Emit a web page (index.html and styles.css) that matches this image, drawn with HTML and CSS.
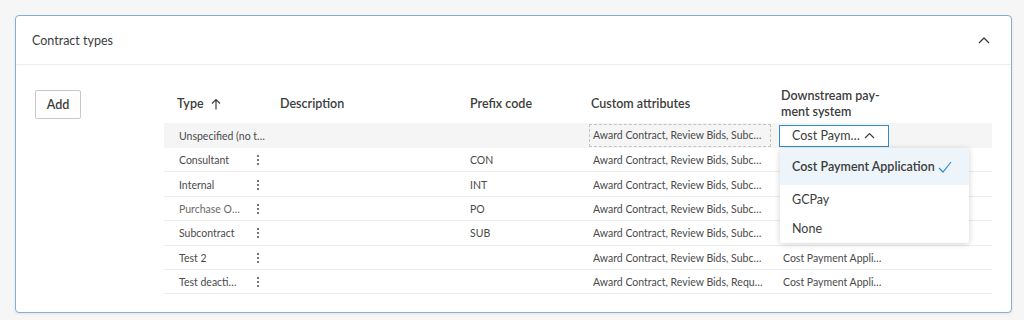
FILE: index.html
```html
<!DOCTYPE html>
<html lang="en">
<head>
  <meta charset="UTF-8" />
  <title>Contract types</title>
  <link rel="stylesheet" href="styles.css">
</head>
<body>

<div class="panel">
  <div class="panel-head">
    <span class="panel-title">Contract types</span>
    <svg class="chevron" width="12" height="8" viewBox="0 0 12 8"><path d="M1 7 L6 2 L11 7" fill="none" stroke="#3c3c3c" stroke-width="1.3"/></svg>
  </div>

  <div class="panel-body">
    <div class="actions">
      <button class="btn">Add</button>
    </div>

    <div class="table">
      <div class="row head">
        <div class="cell c-type">Type
          <svg class="sort" width="10" height="12" viewBox="0 0 10 12"><path d="M5 11.5 V1.5 M1 5.5 L5 1.5 L9 5.5" fill="none" stroke="#3c3c3c" stroke-width="1.2"/></svg>
        </div>
        <div class="cell">Description</div>
        <div class="cell">Prefix code</div>
        <div class="cell">Custom attributes</div>
        <div class="cell c-down">Downstream pay-<br>ment system</div>
      </div>

      <div class="row current">
        <div class="cell c-type"><span class="name wide">Unspecified (no type)</span></div>
        <div class="cell"></div>
        <div class="cell"></div>
        <div class="cell c-attr"><span class="attr-box">Award Contract, Review Bids, Subcontract</span></div>
        <div class="cell c-sel">
          <div class="select">
            <span>Cost Paym…</span>
            <svg width="11" height="7" viewBox="0 0 11 7"><path d="M1 6 L5.5 1.5 L10 6" fill="none" stroke="#3c3c3c" stroke-width="1.2"/></svg>
          </div>
          <div class="menu">
            <div class="opt selected">Cost Payment Application
              <svg width="14" height="12" viewBox="0 0 14 12"><path d="M1 7 L5 11 L13 1" fill="none" stroke="#2f8fd0" stroke-width="1.2"/></svg>
            </div>
            <div class="opt">GCPay</div>
            <div class="opt">None</div>
          </div>
        </div>
      </div>

      <div class="row">
        <div class="cell c-type"><span class="name">Consultant</span><svg class="kebab" width="4" height="12" viewBox="0 0 4 12"><circle cx="2" cy="2" r="1.1"/><circle cx="2" cy="6" r="1.1"/><circle cx="2" cy="10" r="1.1"/></svg></div>
        <div class="cell"></div>
        <div class="cell">CON</div>
        <div class="cell c-txt"><span class="trunc">Award Contract, Review Bids, Subcontract</span></div>
        <div class="cell c-txt"></div>
      </div>
      <div class="row">
        <div class="cell c-type"><span class="name">Internal</span><svg class="kebab" width="4" height="12" viewBox="0 0 4 12"><circle cx="2" cy="2" r="1.1"/><circle cx="2" cy="6" r="1.1"/><circle cx="2" cy="10" r="1.1"/></svg></div>
        <div class="cell"></div>
        <div class="cell">INT</div>
        <div class="cell c-txt"><span class="trunc">Award Contract, Review Bids, Subcontract</span></div>
        <div class="cell c-txt"></div>
      </div>
      <div class="row">
        <div class="cell c-type"><span class="name muted">Purchase Order</span><svg class="kebab" width="4" height="12" viewBox="0 0 4 12"><circle cx="2" cy="2" r="1.1"/><circle cx="2" cy="6" r="1.1"/><circle cx="2" cy="10" r="1.1"/></svg></div>
        <div class="cell"></div>
        <div class="cell">PO</div>
        <div class="cell c-txt"><span class="trunc">Award Contract, Review Bids, Subcontract</span></div>
        <div class="cell c-txt"></div>
      </div>
      <div class="row">
        <div class="cell c-type"><span class="name">Subcontract</span><svg class="kebab" width="4" height="12" viewBox="0 0 4 12"><circle cx="2" cy="2" r="1.1"/><circle cx="2" cy="6" r="1.1"/><circle cx="2" cy="10" r="1.1"/></svg></div>
        <div class="cell"></div>
        <div class="cell">SUB</div>
        <div class="cell c-txt"><span class="trunc">Award Contract, Review Bids, Subcontract</span></div>
        <div class="cell c-txt"></div>
      </div>
      <div class="row">
        <div class="cell c-type"><span class="name">Test 2</span><svg class="kebab" width="4" height="12" viewBox="0 0 4 12"><circle cx="2" cy="2" r="1.1"/><circle cx="2" cy="6" r="1.1"/><circle cx="2" cy="10" r="1.1"/></svg></div>
        <div class="cell"></div>
        <div class="cell"></div>
        <div class="cell c-txt"><span class="trunc">Award Contract, Review Bids, Subcontract</span></div>
        <div class="cell c-txt"><span class="trunc short">Cost Payment Application</span></div>
      </div>
      <div class="row">
        <div class="cell c-type"><span class="name">Test deactivated</span><svg class="kebab" width="4" height="12" viewBox="0 0 4 12"><circle cx="2" cy="2" r="1.1"/><circle cx="2" cy="6" r="1.1"/><circle cx="2" cy="10" r="1.1"/></svg></div>
        <div class="cell"></div>
        <div class="cell"></div>
        <div class="cell c-txt"><span class="trunc">Award Contract, Review Bids, Request</span></div>
        <div class="cell c-txt"><span class="trunc short">Cost Payment Application</span></div>
      </div>
    </div>
  </div>
</div>

</body>
</html>
```

FILE: styles.css
```css
* {
  box-sizing: border-box;
  margin: 0;
  padding: 0;
  font-family: Lato, "Noto Sans", Arial, sans-serif;
}

body {
  background-color: #f6f6f6;
  padding: 15px 12px 7px 15px;
  color: #3c3c3c;
}

.panel {
  height: 298px;
  background-color: #fff;
  border: 1px solid #84afd1;
  border-radius: 4px;
  box-shadow: 0 1px 3px rgba(0, 0, 0, 0.08);
}

.panel-head {
  height: 49px;
  display: flex;
  align-items: center;
  justify-content: space-between;
  padding: 0 21px 0 16px;
  border-bottom: 1px solid #eeeeee;
}

.panel-title {
  font-size: 12.5px;
  color: #3c3c3c;
}

.panel-body {
  display: flex;
  padding: 20px 19px 0 19px;
}

.actions {
  width: 129px;
  padding-top: 5px;
}

.btn {
  width: 46px;
  height: 29px;
  background: #fff;
  border: 1px solid #c8c8c8;
  border-radius: 2px;
  font-size: 12.5px;
  font-weight: 600;
  color: #3c3c3c;
}

.table {
  width: 828px;
}

.row {
  display: grid;
  grid-template-columns: 106px 190px 121px 190px 221px;
  height: 24.4px;
  padding-top: 1px;
  border-bottom: 1px solid #ebebeb;
  font-size: 10.5px;
  color: #4a4a4a;
}

.row.head {
  height: 38px;
  padding-top: 0;
  border-bottom: none;
  font-size: 12.5px;
  font-weight: 600;
  color: #3c3c3c;
  line-height: 16px;
}

.row.current {
  height: 25px;
  padding-top: 0;
  background-color: #f5f5f5;
  border-bottom: none;
}

.cell {
  display: flex;
  align-items: center;
  padding-left: 10px;
  white-space: nowrap;
  min-width: 0;
}

.row.head .c-type {
  padding-left: 13px;
}

.sort {
  margin-left: 7px;
}

.c-type {
  padding-left: 15px;
}

.name {
  display: inline-block;
  width: 62px;
  overflow: hidden;
  text-overflow: ellipsis;
}

.name.wide {
  width: auto;
  max-width: 97px;
}

.muted {
  color: #6a6a6a;
}

.kebab {
  margin-left: 15px;
  fill: #555;
}

.c-txt {
  padding-left: 12px;
}

.trunc {
  display: inline-block;
  max-width: 172px;
  overflow: hidden;
  text-overflow: ellipsis;
}

.trunc.short {
  max-width: 100px;
}

.c-attr {
  padding-left: 8px;
}

.attr-box {
  display: block;
  width: 182px;
  height: 23px;
  line-height: 21px;
  padding: 0 8px 0 3px;
  border: 1px dashed #c4c4c4;
  overflow: hidden;
  text-overflow: ellipsis;
}

.c-sel {
  position: relative;
  padding-left: 8px;
}

.select {
  width: 110px;
  height: 22px;
  display: flex;
  align-items: center;
  justify-content: space-between;
  padding: 0 13px 0 12px;
  border: 1px solid #2f8bc9;
  font-size: 12.5px;
  color: #3c3c3c;
  background: #fff;
}

.menu {
  position: absolute;
  top: 25px;
  left: 9px;
  width: 189px;
  background: #fff;
  border-radius: 3px;
  box-shadow: 0 1px 6px rgba(0, 0, 0, 0.18);
  z-index: 2;
  font-size: 12.5px;
  color: #3c3c3c;
}

.opt {
  height: 29px;
  display: flex;
  align-items: center;
  justify-content: space-between;
  padding: 0 17px 0 12px;
}

.opt.selected {
  height: 37px;
  background-color: #edf5fb;
  font-weight: 600;
}
```
